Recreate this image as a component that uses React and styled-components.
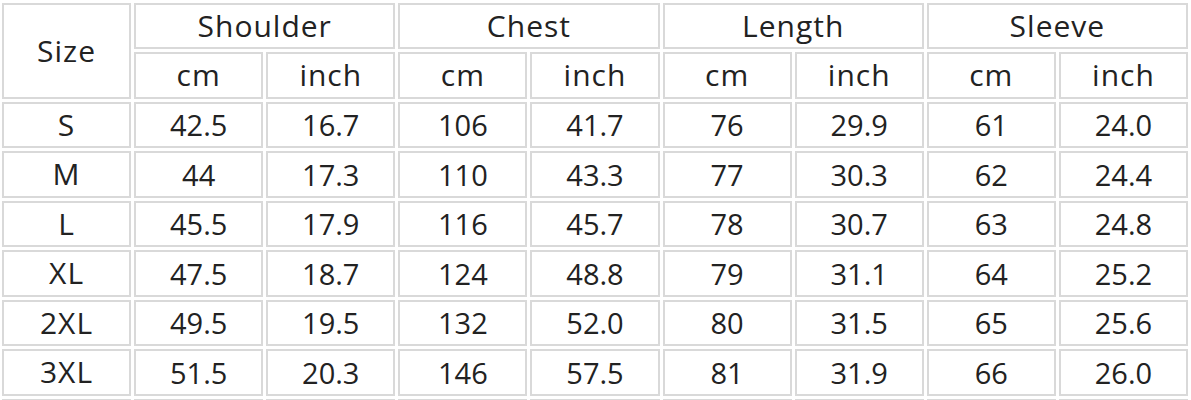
import React from "react";
import styled, { createGlobalStyle } from "styled-components";

const Global = createGlobalStyle`
  html, body { margin: 0; padding: 0; background: #ffffff; }
  body { font-family: "Open Sans", "Noto Sans", sans-serif; }
`;

const Grid = styled.div`
  display: grid;
  grid-template-columns: repeat(9, 1fr);
  grid-auto-rows: 46.5px;
  gap: 3px;
  width: 1191px;
  box-sizing: border-box;
  padding: 2.5px 3px 0 2px;
  background: #ffffff;
`;

const Cell = styled.div`
  display: flex;
  align-items: center;
  justify-content: center;
  box-sizing: border-box;
  border: 2px solid #d9d9d9;
  font-family: "Open Sans", "Noto Sans", sans-serif;
  font-size: ${(p) => (p.$label ? "30px" : "29px")};
  letter-spacing: ${(p) => (p.$label ? "1px" : "0")};
  color: #222222;
  line-height: 1;
  grid-column: ${(p) => (p.$colSpan ? `span ${p.$colSpan}` : "auto")};
  grid-row: ${(p) => (p.$rowSpan ? `span ${p.$rowSpan}` : "auto")};
`;

const groups = ["Shoulder", "Chest", "Length", "Sleeve"];

const rows = [
  ["S", "42.5", "16.7", "106", "41.7", "76", "29.9", "61", "24.0"],
  ["M", "44", "17.3", "110", "43.3", "77", "30.3", "62", "24.4"],
  ["L", "45.5", "17.9", "116", "45.7", "78", "30.7", "63", "24.8"],
  ["XL", "47.5", "18.7", "124", "48.8", "79", "31.1", "64", "25.2"],
  ["2XL", "49.5", "19.5", "132", "52.0", "80", "31.5", "65", "25.6"],
  ["3XL", "51.5", "20.3", "146", "57.5", "81", "31.9", "66", "26.0"],
];

export default function App() {
  return (
    <>
      <Global />
      <Grid>
        <Cell $label $rowSpan={2}>
          Size
        </Cell>
        {groups.map((g) => (
          <Cell key={g} $label $colSpan={2}>
            {g}
          </Cell>
        ))}
        {groups.map((g) => (
          <React.Fragment key={g + "-u"}>
            <Cell $label>cm</Cell>
            <Cell $label>inch</Cell>
          </React.Fragment>
        ))}
        {rows.map((r) =>
          r.map((v, i) => (
            <Cell key={r[0] + "-" + i} $label={i === 0}>
              {v}
            </Cell>
          ))
        )}
        {Array.from({ length: 9 }).map((_, i) => (
          <Cell key={"tail-" + i} />
        ))}
      </Grid>
    </>
  );
}
